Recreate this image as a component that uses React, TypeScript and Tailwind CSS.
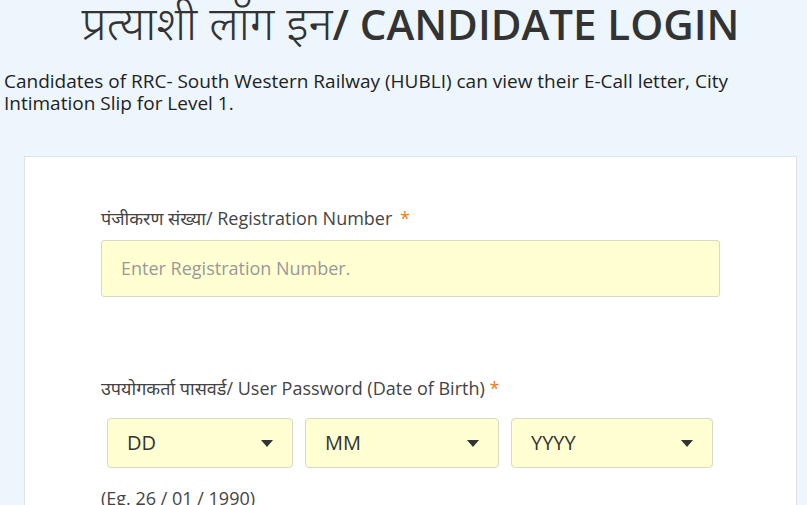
import React from "react";

const Caret = () => (
  <svg width="12" height="7" viewBox="0 0 12 7" className="shrink-0">
    <path d="M0 0 L12 0 L6 7 Z" fill="#333" />
  </svg>
);

const Select = ({ label, w }: { label: string; w: string }) => (
  <div
    className={`${w} h-[50px] flex items-center justify-between pl-[19px] pr-[19px] bg-[#ffffd2] border border-[#d8d8c4] rounded-[4px] text-[20px] text-[#333]`}
  >
    <span>{label}</span>
    <Caret />
  </div>
);

export default function App() {
  return (
    <div
      className="w-[807px] h-[505px] overflow-hidden bg-[#eef6fd] text-[#333]"
      style={{ fontFamily: '"Open Sans", "Noto Sans", sans-serif' }}
    >
      <h1 className="text-center text-[42px] leading-[44px] font-semibold text-[#333] pl-[14px]">
        <span className="font-light text-[46px]">प्रत्याशी लॉग इन</span>/ CANDIDATE LOGIN
      </h1>
      <p className="mt-[24px] px-[4px] text-[19px] leading-[22px] text-[#222]">
        Candidates of RRC- South Western Railway (HUBLI) can view their E-Call letter, City
        Intimation Slip for Level 1.
      </p>
      <div className="ml-[24px] mt-[42px] w-[773px] h-[400px] bg-white border border-[#dde3e8] pl-[76px] pt-[49px]">
        <div className="text-[18px] leading-[24px] text-[#444]">
          पंजीकरण संख्या/ Registration Number{" "}
          <span className="text-[#e67e22] ml-[3px]">*</span>
        </div>
        <div className="mt-[10px] w-[619px] h-[57px] bg-[#ffffd2] border border-[#d8d8c4] rounded-[3px] flex items-center pl-[19px] text-[18px] text-[#999]">
          Enter Registration Number.
        </div>
        <div className="mt-[79px] text-[18px] leading-[24px] text-[#444]">
          उपयोगकर्ता पासवर्ड/ User Password (Date of Birth){" "}
          <span className="text-[#e67e22]">*</span>
        </div>
        <div className="mt-[18px] ml-[6px] flex gap-[12px]">
          <Select label="DD" w="w-[186px]" />
          <Select label="MM" w="w-[194px]" />
          <Select label="YYYY" w="w-[202px]" />
        </div>
        <div className="mt-[17px] text-[18px] text-[#444]">(Eg. 26 / 01 / 1990)</div>
      </div>
    </div>
  );
}
